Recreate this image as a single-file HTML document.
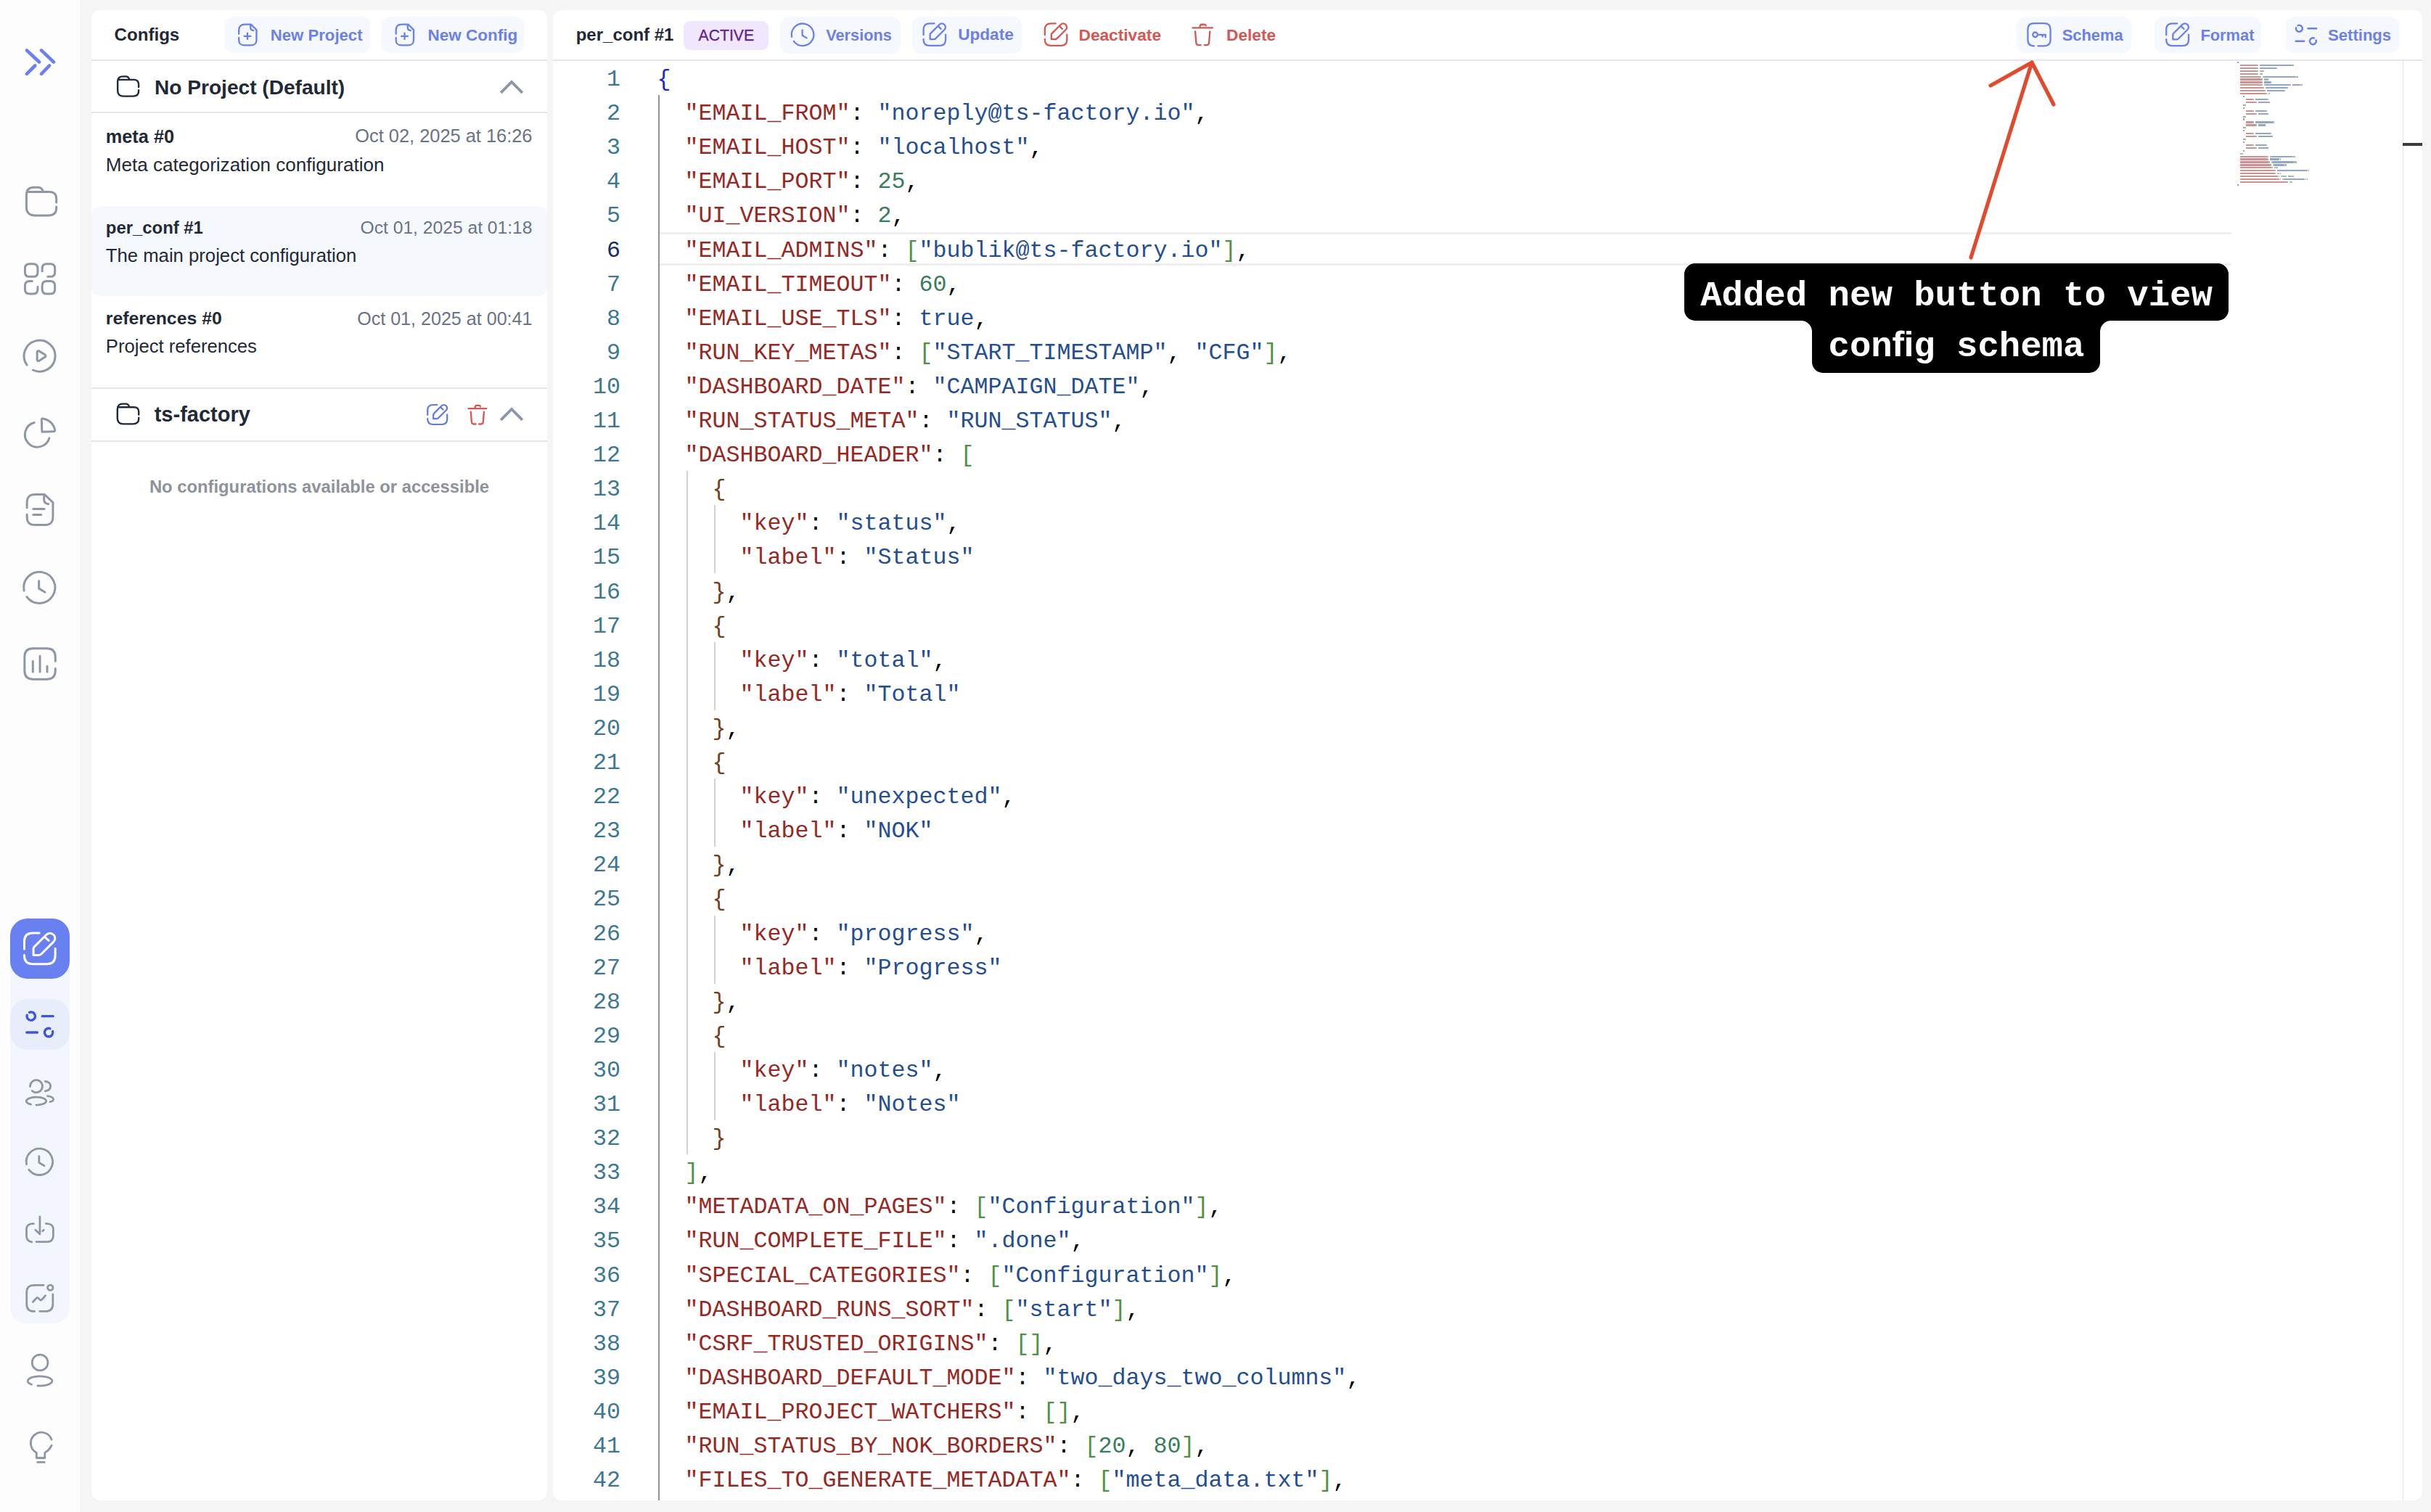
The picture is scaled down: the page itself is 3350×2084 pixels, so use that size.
<!DOCTYPE html><html><head><meta charset="utf-8"><style>
html,body{margin:0;padding:0;}
body{width:3350px;height:2084px;background:#f5f5f5;position:relative;overflow:hidden;font-family:'Liberation Sans', sans-serif;}
.t{position:absolute;white-space:nowrap;line-height:1;}
.r{position:absolute;}
.code{position:absolute;left:0;top:0;font-family:'Liberation Mono', monospace;white-space:pre;}
.ln{position:absolute;font-family:'Liberation Mono', monospace;text-align:right;}
.k{color:#962823} .s{color:#244e92} .n{color:#387e5b} .p{color:#000}
.b1{color:#1b27cc} .b2{color:#4f9245} .b3{color:#70401c}
</style></head><body>
<div class="r" style="left:0px;top:0px;width:110px;height:2084px;background:#fdfdfd;border-radius:0px;"></div>
<div class="r" style="left:14px;top:1266px;width:82px;height:558px;background:#f3f6fe;border-radius:22px;"></div>
<div class="r" style="left:14px;top:1266px;width:82px;height:83px;background:#6981f0;border-radius:24px;"></div>
<div class="r" style="left:14px;top:1377px;width:82px;height:70px;background:#e8edfc;border-radius:24px;"></div>
<div class="r" style="left:126px;top:14px;width:628px;height:2054px;background:#ffffff;border-radius:12px;"></div>
<div class="t" style="left:157.6px;top:36.3px;font-size:24.1px;color:#1f2937;font-weight:bold;">Configs</div>
<div class="r" style="left:309px;top:23px;width:201px;height:50px;background:#f5f8fe;border-radius:12px;"></div>
<div class="t" style="left:372.8px;top:37.9px;font-size:22.15px;color:#6b80ea;font-weight:bold;">New Project</div>
<div class="r" style="left:526px;top:23px;width:196px;height:50px;background:#f5f8fe;border-radius:12px;"></div>
<div class="t" style="left:589.4px;top:37.6px;font-size:22.5px;color:#6b80ea;font-weight:bold;">New Config</div>
<div class="r" style="left:126px;top:82px;width:628px;height:2px;background:#e3e6ec;border-radius:0px;"></div>
<div class="t" style="left:213.0px;top:106.7px;font-size:28.1px;color:#1f2937;font-weight:bold;">No Project (Default)</div>
<div class="r" style="left:126px;top:154px;width:628px;height:2px;background:#e3e6ec;border-radius:0px;"></div>
<div class="r" style="left:126px;top:283.5px;width:628px;height:124.5px;background:#f5f8fd;border-radius:12px;"></div>
<div class="t" style="left:145.8px;top:175.5px;font-size:25.3px;color:#1f2937;font-weight:bold;">meta #0</div>
<div class="t" style="right:2616.5px;top:175.4px;font-size:25.4px;color:#697386;font-weight:normal;">Oct 02, 2025 at 16:26</div>
<div class="t" style="left:145.8px;top:213.9px;font-size:26.05px;color:#1f2937;font-weight:normal;">Meta categorization configuration</div>
<div class="t" style="left:145.8px;top:302.3px;font-size:23.9px;color:#1f2937;font-weight:bold;">per_conf #1</div>
<div class="t" style="right:2616.5px;top:301.6px;font-size:24.65px;color:#697386;font-weight:normal;">Oct 01, 2025 at 01:18</div>
<div class="t" style="left:145.8px;top:339.6px;font-size:25.7px;color:#1f2937;font-weight:normal;">The main project configuration</div>
<div class="t" style="left:145.8px;top:426.8px;font-size:24.8px;color:#1f2937;font-weight:bold;">references #0</div>
<div class="t" style="right:2616.5px;top:426.5px;font-size:25.1px;color:#697386;font-weight:normal;">Oct 01, 2025 at 00:41</div>
<div class="t" style="left:145.8px;top:465.0px;font-size:25.65px;color:#1f2937;font-weight:normal;">Project references</div>
<div class="r" style="left:126px;top:534px;width:628px;height:2px;background:#e3e6ec;border-radius:0px;"></div>
<div class="t" style="left:212.7px;top:557.3px;font-size:29.0px;color:#1f2937;font-weight:bold;">ts-factory</div>
<div class="r" style="left:126px;top:606.5px;width:628px;height:2.0px;background:#e3e6ec;border-radius:0px;"></div>
<div class="t" style="left:-560.0px;width:2000px;text-align:center;top:659.1px;font-size:23.8px;color:#8d929b;font-weight:bold;">No configurations available or accessible</div>
<div class="r" style="left:762px;top:14px;width:2576px;height:2054px;background:#ffffff;border-radius:12px;"></div>
<div class="r" style="left:762px;top:82px;width:2576px;height:2px;background:#e3e6ec;border-radius:0px;"></div>
<div class="t" style="left:793.7px;top:36.1px;font-size:24.0px;color:#1f2937;font-weight:bold;">per_conf #1</div>
<div class="r" style="left:942px;top:29px;width:117px;height:40px;background:#f0e7fc;border-radius:9px;"></div>
<div class="t" style="left:962.5px;top:38.0px;font-size:21.2px;color:#5f2494;font-weight:normal;-webkit-text-stroke:0.35px #5f2494;">ACTIVE</div>
<div class="r" style="left:1075px;top:23px;width:166px;height:51px;background:#f5f8fe;border-radius:12px;"></div>
<div class="t" style="left:1138.2px;top:38.0px;font-size:21.75px;color:#6b80ea;font-weight:bold;">Versions</div>
<div class="r" style="left:1257px;top:23px;width:150.5px;height:51px;background:#f5f8fe;border-radius:12px;"></div>
<div class="t" style="left:1320.2px;top:37.1px;font-size:22.6px;color:#6b80ea;font-weight:bold;">Update</div>
<div class="t" style="left:1486.5px;top:37.0px;font-size:22.7px;color:#d65651;font-weight:bold;">Deactivate</div>
<div class="t" style="left:1690.0px;top:37.0px;font-size:22.7px;color:#d65651;font-weight:bold;">Delete</div>
<div class="r" style="left:2779px;top:23px;width:158px;height:50px;background:#f5f8fe;border-radius:12px;"></div>
<div class="t" style="left:2841.7px;top:37.9px;font-size:21.9px;color:#6b80ea;font-weight:bold;">Schema</div>
<div class="r" style="left:2969px;top:23px;width:147px;height:50px;background:#f5f8fe;border-radius:12px;"></div>
<div class="t" style="left:3032.4px;top:37.9px;font-size:21.85px;color:#6b80ea;font-weight:bold;">Format</div>
<div class="r" style="left:3149px;top:23px;width:157px;height:50px;background:#f5f8fe;border-radius:12px;"></div>
<div class="t" style="left:3208.0px;top:37.7px;font-size:22.1px;color:#6b80ea;font-weight:bold;">Settings</div>
<div class="r" style="left:907px;top:320px;width:2168px;height:39.8px;border-top:3.6px solid #eeeeee;border-bottom:3.6px solid #eeeeee;"></div>
<div class="r" style="left:907px;top:131.1px;width:2px;height:1936.9px;background:#939393;border-radius:0px;"></div>
<div class="r" style="left:945.5px;top:649.2px;width:2.0px;height:942.0px;background:#d3d3d3;border-radius:0px;"></div>
<div class="r" style="left:983.5px;top:696.3px;width:2.0px;height:94.20000000000005px;background:#d3d3d3;border-radius:0px;"></div>
<div class="r" style="left:983.5px;top:884.7px;width:2.0px;height:94.19999999999993px;background:#d3d3d3;border-radius:0px;"></div>
<div class="r" style="left:983.5px;top:1073.1px;width:2.0px;height:94.20000000000005px;background:#d3d3d3;border-radius:0px;"></div>
<div class="r" style="left:983.5px;top:1261.5px;width:2.0px;height:94.20000000000005px;background:#d3d3d3;border-radius:0px;"></div>
<div class="r" style="left:983.5px;top:1449.9px;width:2.0px;height:94.19999999999982px;background:#d3d3d3;border-radius:0px;"></div>
<div class="ln" style="left:700px;width:155px;top:87.0px;height:47.1px;line-height:47.1px;font-size:31.667px;color:#3c7891">1</div>
<div class="code" style="left:905.5px;top:87.0px;height:47.1px;line-height:47.1px;font-size:31.667px"><span class="b1">{</span></div>
<div class="ln" style="left:700px;width:155px;top:134.1px;height:47.1px;line-height:47.1px;font-size:31.667px;color:#3c7891">2</div>
<div class="code" style="left:905.5px;top:134.1px;height:47.1px;line-height:47.1px;font-size:31.667px"><span class="p">  </span><span class="k">&quot;EMAIL_FROM&quot;</span><span class="p">: </span><span class="s">&quot;noreply@ts-factory.io&quot;</span><span class="p">,</span></div>
<div class="ln" style="left:700px;width:155px;top:181.2px;height:47.1px;line-height:47.1px;font-size:31.667px;color:#3c7891">3</div>
<div class="code" style="left:905.5px;top:181.2px;height:47.1px;line-height:47.1px;font-size:31.667px"><span class="p">  </span><span class="k">&quot;EMAIL_HOST&quot;</span><span class="p">: </span><span class="s">&quot;localhost&quot;</span><span class="p">,</span></div>
<div class="ln" style="left:700px;width:155px;top:228.3px;height:47.1px;line-height:47.1px;font-size:31.667px;color:#3c7891">4</div>
<div class="code" style="left:905.5px;top:228.3px;height:47.1px;line-height:47.1px;font-size:31.667px"><span class="p">  </span><span class="k">&quot;EMAIL_PORT&quot;</span><span class="p">: </span><span class="n">25</span><span class="p">,</span></div>
<div class="ln" style="left:700px;width:155px;top:275.4px;height:47.1px;line-height:47.1px;font-size:31.667px;color:#3c7891">5</div>
<div class="code" style="left:905.5px;top:275.4px;height:47.1px;line-height:47.1px;font-size:31.667px"><span class="p">  </span><span class="k">&quot;UI_VERSION&quot;</span><span class="p">: </span><span class="n">2</span><span class="p">,</span></div>
<div class="ln" style="left:700px;width:155px;top:322.5px;height:47.1px;line-height:47.1px;font-size:31.667px;color:#172a6a">6</div>
<div class="code" style="left:905.5px;top:322.5px;height:47.1px;line-height:47.1px;font-size:31.667px"><span class="p">  </span><span class="k">&quot;EMAIL_ADMINS&quot;</span><span class="p">: </span><span class="b2">[</span><span class="s">&quot;bublik@ts-factory.io&quot;</span><span class="b2">]</span><span class="p">,</span></div>
<div class="ln" style="left:700px;width:155px;top:369.6px;height:47.1px;line-height:47.1px;font-size:31.667px;color:#3c7891">7</div>
<div class="code" style="left:905.5px;top:369.6px;height:47.1px;line-height:47.1px;font-size:31.667px"><span class="p">  </span><span class="k">&quot;EMAIL_TIMEOUT&quot;</span><span class="p">: </span><span class="n">60</span><span class="p">,</span></div>
<div class="ln" style="left:700px;width:155px;top:416.7px;height:47.1px;line-height:47.1px;font-size:31.667px;color:#3c7891">8</div>
<div class="code" style="left:905.5px;top:416.7px;height:47.1px;line-height:47.1px;font-size:31.667px"><span class="p">  </span><span class="k">&quot;EMAIL_USE_TLS&quot;</span><span class="p">: </span><span class="s">true</span><span class="p">,</span></div>
<div class="ln" style="left:700px;width:155px;top:463.8px;height:47.1px;line-height:47.1px;font-size:31.667px;color:#3c7891">9</div>
<div class="code" style="left:905.5px;top:463.8px;height:47.1px;line-height:47.1px;font-size:31.667px"><span class="p">  </span><span class="k">&quot;RUN_KEY_METAS&quot;</span><span class="p">: </span><span class="b2">[</span><span class="s">&quot;START_TIMESTAMP&quot;</span><span class="p">, </span><span class="s">&quot;CFG&quot;</span><span class="b2">]</span><span class="p">,</span></div>
<div class="ln" style="left:700px;width:155px;top:510.9px;height:47.1px;line-height:47.1px;font-size:31.667px;color:#3c7891">10</div>
<div class="code" style="left:905.5px;top:510.9px;height:47.1px;line-height:47.1px;font-size:31.667px"><span class="p">  </span><span class="k">&quot;DASHBOARD_DATE&quot;</span><span class="p">: </span><span class="s">&quot;CAMPAIGN_DATE&quot;</span><span class="p">,</span></div>
<div class="ln" style="left:700px;width:155px;top:558.0px;height:47.1px;line-height:47.1px;font-size:31.667px;color:#3c7891">11</div>
<div class="code" style="left:905.5px;top:558.0px;height:47.1px;line-height:47.1px;font-size:31.667px"><span class="p">  </span><span class="k">&quot;RUN_STATUS_META&quot;</span><span class="p">: </span><span class="s">&quot;RUN_STATUS&quot;</span><span class="p">,</span></div>
<div class="ln" style="left:700px;width:155px;top:605.1px;height:47.1px;line-height:47.1px;font-size:31.667px;color:#3c7891">12</div>
<div class="code" style="left:905.5px;top:605.1px;height:47.1px;line-height:47.1px;font-size:31.667px"><span class="p">  </span><span class="k">&quot;DASHBOARD_HEADER&quot;</span><span class="p">: </span><span class="b2">[</span></div>
<div class="ln" style="left:700px;width:155px;top:652.2px;height:47.1px;line-height:47.1px;font-size:31.667px;color:#3c7891">13</div>
<div class="code" style="left:905.5px;top:652.2px;height:47.1px;line-height:47.1px;font-size:31.667px"><span class="p">  </span><span class="p">  </span><span class="b3">{</span></div>
<div class="ln" style="left:700px;width:155px;top:699.3px;height:47.1px;line-height:47.1px;font-size:31.667px;color:#3c7891">14</div>
<div class="code" style="left:905.5px;top:699.3px;height:47.1px;line-height:47.1px;font-size:31.667px"><span class="p">  </span><span class="p">    </span><span class="k">&quot;key&quot;</span><span class="p">: </span><span class="s">&quot;status&quot;</span><span class="p">,</span></div>
<div class="ln" style="left:700px;width:155px;top:746.4px;height:47.1px;line-height:47.1px;font-size:31.667px;color:#3c7891">15</div>
<div class="code" style="left:905.5px;top:746.4px;height:47.1px;line-height:47.1px;font-size:31.667px"><span class="p">  </span><span class="p">    </span><span class="k">&quot;label&quot;</span><span class="p">: </span><span class="s">&quot;Status&quot;</span></div>
<div class="ln" style="left:700px;width:155px;top:793.5px;height:47.1px;line-height:47.1px;font-size:31.667px;color:#3c7891">16</div>
<div class="code" style="left:905.5px;top:793.5px;height:47.1px;line-height:47.1px;font-size:31.667px"><span class="p">  </span><span class="p">  </span><span class="b3">}</span><span class="p">,</span></div>
<div class="ln" style="left:700px;width:155px;top:840.6px;height:47.1px;line-height:47.1px;font-size:31.667px;color:#3c7891">17</div>
<div class="code" style="left:905.5px;top:840.6px;height:47.1px;line-height:47.1px;font-size:31.667px"><span class="p">  </span><span class="p">  </span><span class="b3">{</span></div>
<div class="ln" style="left:700px;width:155px;top:887.7px;height:47.1px;line-height:47.1px;font-size:31.667px;color:#3c7891">18</div>
<div class="code" style="left:905.5px;top:887.7px;height:47.1px;line-height:47.1px;font-size:31.667px"><span class="p">  </span><span class="p">    </span><span class="k">&quot;key&quot;</span><span class="p">: </span><span class="s">&quot;total&quot;</span><span class="p">,</span></div>
<div class="ln" style="left:700px;width:155px;top:934.8px;height:47.1px;line-height:47.1px;font-size:31.667px;color:#3c7891">19</div>
<div class="code" style="left:905.5px;top:934.8px;height:47.1px;line-height:47.1px;font-size:31.667px"><span class="p">  </span><span class="p">    </span><span class="k">&quot;label&quot;</span><span class="p">: </span><span class="s">&quot;Total&quot;</span></div>
<div class="ln" style="left:700px;width:155px;top:981.9px;height:47.1px;line-height:47.1px;font-size:31.667px;color:#3c7891">20</div>
<div class="code" style="left:905.5px;top:981.9px;height:47.1px;line-height:47.1px;font-size:31.667px"><span class="p">  </span><span class="p">  </span><span class="b3">}</span><span class="p">,</span></div>
<div class="ln" style="left:700px;width:155px;top:1029.0px;height:47.1px;line-height:47.1px;font-size:31.667px;color:#3c7891">21</div>
<div class="code" style="left:905.5px;top:1029.0px;height:47.1px;line-height:47.1px;font-size:31.667px"><span class="p">  </span><span class="p">  </span><span class="b3">{</span></div>
<div class="ln" style="left:700px;width:155px;top:1076.1px;height:47.1px;line-height:47.1px;font-size:31.667px;color:#3c7891">22</div>
<div class="code" style="left:905.5px;top:1076.1px;height:47.1px;line-height:47.1px;font-size:31.667px"><span class="p">  </span><span class="p">    </span><span class="k">&quot;key&quot;</span><span class="p">: </span><span class="s">&quot;unexpected&quot;</span><span class="p">,</span></div>
<div class="ln" style="left:700px;width:155px;top:1123.2px;height:47.1px;line-height:47.1px;font-size:31.667px;color:#3c7891">23</div>
<div class="code" style="left:905.5px;top:1123.2px;height:47.1px;line-height:47.1px;font-size:31.667px"><span class="p">  </span><span class="p">    </span><span class="k">&quot;label&quot;</span><span class="p">: </span><span class="s">&quot;NOK&quot;</span></div>
<div class="ln" style="left:700px;width:155px;top:1170.3px;height:47.1px;line-height:47.1px;font-size:31.667px;color:#3c7891">24</div>
<div class="code" style="left:905.5px;top:1170.3px;height:47.1px;line-height:47.1px;font-size:31.667px"><span class="p">  </span><span class="p">  </span><span class="b3">}</span><span class="p">,</span></div>
<div class="ln" style="left:700px;width:155px;top:1217.4px;height:47.1px;line-height:47.1px;font-size:31.667px;color:#3c7891">25</div>
<div class="code" style="left:905.5px;top:1217.4px;height:47.1px;line-height:47.1px;font-size:31.667px"><span class="p">  </span><span class="p">  </span><span class="b3">{</span></div>
<div class="ln" style="left:700px;width:155px;top:1264.5px;height:47.1px;line-height:47.1px;font-size:31.667px;color:#3c7891">26</div>
<div class="code" style="left:905.5px;top:1264.5px;height:47.1px;line-height:47.1px;font-size:31.667px"><span class="p">  </span><span class="p">    </span><span class="k">&quot;key&quot;</span><span class="p">: </span><span class="s">&quot;progress&quot;</span><span class="p">,</span></div>
<div class="ln" style="left:700px;width:155px;top:1311.6px;height:47.1px;line-height:47.1px;font-size:31.667px;color:#3c7891">27</div>
<div class="code" style="left:905.5px;top:1311.6px;height:47.1px;line-height:47.1px;font-size:31.667px"><span class="p">  </span><span class="p">    </span><span class="k">&quot;label&quot;</span><span class="p">: </span><span class="s">&quot;Progress&quot;</span></div>
<div class="ln" style="left:700px;width:155px;top:1358.7px;height:47.1px;line-height:47.1px;font-size:31.667px;color:#3c7891">28</div>
<div class="code" style="left:905.5px;top:1358.7px;height:47.1px;line-height:47.1px;font-size:31.667px"><span class="p">  </span><span class="p">  </span><span class="b3">}</span><span class="p">,</span></div>
<div class="ln" style="left:700px;width:155px;top:1405.8px;height:47.1px;line-height:47.1px;font-size:31.667px;color:#3c7891">29</div>
<div class="code" style="left:905.5px;top:1405.8px;height:47.1px;line-height:47.1px;font-size:31.667px"><span class="p">  </span><span class="p">  </span><span class="b3">{</span></div>
<div class="ln" style="left:700px;width:155px;top:1452.9px;height:47.1px;line-height:47.1px;font-size:31.667px;color:#3c7891">30</div>
<div class="code" style="left:905.5px;top:1452.9px;height:47.1px;line-height:47.1px;font-size:31.667px"><span class="p">  </span><span class="p">    </span><span class="k">&quot;key&quot;</span><span class="p">: </span><span class="s">&quot;notes&quot;</span><span class="p">,</span></div>
<div class="ln" style="left:700px;width:155px;top:1500.0px;height:47.1px;line-height:47.1px;font-size:31.667px;color:#3c7891">31</div>
<div class="code" style="left:905.5px;top:1500.0px;height:47.1px;line-height:47.1px;font-size:31.667px"><span class="p">  </span><span class="p">    </span><span class="k">&quot;label&quot;</span><span class="p">: </span><span class="s">&quot;Notes&quot;</span></div>
<div class="ln" style="left:700px;width:155px;top:1547.1px;height:47.1px;line-height:47.1px;font-size:31.667px;color:#3c7891">32</div>
<div class="code" style="left:905.5px;top:1547.1px;height:47.1px;line-height:47.1px;font-size:31.667px"><span class="p">  </span><span class="p">  </span><span class="b3">}</span></div>
<div class="ln" style="left:700px;width:155px;top:1594.2px;height:47.1px;line-height:47.1px;font-size:31.667px;color:#3c7891">33</div>
<div class="code" style="left:905.5px;top:1594.2px;height:47.1px;line-height:47.1px;font-size:31.667px"><span class="p">  </span><span class="b2">]</span><span class="p">,</span></div>
<div class="ln" style="left:700px;width:155px;top:1641.3px;height:47.1px;line-height:47.1px;font-size:31.667px;color:#3c7891">34</div>
<div class="code" style="left:905.5px;top:1641.3px;height:47.1px;line-height:47.1px;font-size:31.667px"><span class="p">  </span><span class="k">&quot;METADATA_ON_PAGES&quot;</span><span class="p">: </span><span class="b2">[</span><span class="s">&quot;Configuration&quot;</span><span class="b2">]</span><span class="p">,</span></div>
<div class="ln" style="left:700px;width:155px;top:1688.4px;height:47.1px;line-height:47.1px;font-size:31.667px;color:#3c7891">35</div>
<div class="code" style="left:905.5px;top:1688.4px;height:47.1px;line-height:47.1px;font-size:31.667px"><span class="p">  </span><span class="k">&quot;RUN_COMPLETE_FILE&quot;</span><span class="p">: </span><span class="s">&quot;.done&quot;</span><span class="p">,</span></div>
<div class="ln" style="left:700px;width:155px;top:1735.5px;height:47.1px;line-height:47.1px;font-size:31.667px;color:#3c7891">36</div>
<div class="code" style="left:905.5px;top:1735.5px;height:47.1px;line-height:47.1px;font-size:31.667px"><span class="p">  </span><span class="k">&quot;SPECIAL_CATEGORIES&quot;</span><span class="p">: </span><span class="b2">[</span><span class="s">&quot;Configuration&quot;</span><span class="b2">]</span><span class="p">,</span></div>
<div class="ln" style="left:700px;width:155px;top:1782.6px;height:47.1px;line-height:47.1px;font-size:31.667px;color:#3c7891">37</div>
<div class="code" style="left:905.5px;top:1782.6px;height:47.1px;line-height:47.1px;font-size:31.667px"><span class="p">  </span><span class="k">&quot;DASHBOARD_RUNS_SORT&quot;</span><span class="p">: </span><span class="b2">[</span><span class="s">&quot;start&quot;</span><span class="b2">]</span><span class="p">,</span></div>
<div class="ln" style="left:700px;width:155px;top:1829.7px;height:47.1px;line-height:47.1px;font-size:31.667px;color:#3c7891">38</div>
<div class="code" style="left:905.5px;top:1829.7px;height:47.1px;line-height:47.1px;font-size:31.667px"><span class="p">  </span><span class="k">&quot;CSRF_TRUSTED_ORIGINS&quot;</span><span class="p">: </span><span class="b2">[]</span><span class="p">,</span></div>
<div class="ln" style="left:700px;width:155px;top:1876.8px;height:47.1px;line-height:47.1px;font-size:31.667px;color:#3c7891">39</div>
<div class="code" style="left:905.5px;top:1876.8px;height:47.1px;line-height:47.1px;font-size:31.667px"><span class="p">  </span><span class="k">&quot;DASHBOARD_DEFAULT_MODE&quot;</span><span class="p">: </span><span class="s">&quot;two_days_two_columns&quot;</span><span class="p">,</span></div>
<div class="ln" style="left:700px;width:155px;top:1923.9px;height:47.1px;line-height:47.1px;font-size:31.667px;color:#3c7891">40</div>
<div class="code" style="left:905.5px;top:1923.9px;height:47.1px;line-height:47.1px;font-size:31.667px"><span class="p">  </span><span class="k">&quot;EMAIL_PROJECT_WATCHERS&quot;</span><span class="p">: </span><span class="b2">[]</span><span class="p">,</span></div>
<div class="ln" style="left:700px;width:155px;top:1971.0px;height:47.1px;line-height:47.1px;font-size:31.667px;color:#3c7891">41</div>
<div class="code" style="left:905.5px;top:1971.0px;height:47.1px;line-height:47.1px;font-size:31.667px"><span class="p">  </span><span class="k">&quot;RUN_STATUS_BY_NOK_BORDERS&quot;</span><span class="p">: </span><span class="b2">[</span><span class="n">20</span><span class="p">, </span><span class="n">80</span><span class="b2">]</span><span class="p">,</span></div>
<div class="ln" style="left:700px;width:155px;top:2018.1px;height:47.1px;line-height:47.1px;font-size:31.667px;color:#3c7891">42</div>
<div class="code" style="left:905.5px;top:2018.1px;height:47.1px;line-height:47.1px;font-size:31.667px"><span class="p">  </span><span class="k">&quot;FILES_TO_GENERATE_METADATA&quot;</span><span class="p">: </span><span class="b2">[</span><span class="s">&quot;meta_data.txt&quot;</span><span class="b2">]</span><span class="p">,</span></div>
<div class="r" style="left:3083.0px;top:84.8px;width:1.9px;height:2.3px;background:#1b27cc;opacity:0.5"></div><div class="r" style="left:3086.9px;top:88.7px;width:23.4px;height:2.3px;background:#962823;opacity:0.5"></div><div class="r" style="left:3110.3px;top:88.7px;width:1.9px;height:2.3px;background:#000000;opacity:0.3"></div><div class="r" style="left:3114.2px;top:88.7px;width:44.9px;height:2.3px;background:#244e92;opacity:0.5"></div><div class="r" style="left:3159.1px;top:88.7px;width:1.9px;height:2.3px;background:#000000;opacity:0.3"></div><div class="r" style="left:3086.9px;top:92.7px;width:23.4px;height:2.3px;background:#962823;opacity:0.5"></div><div class="r" style="left:3110.3px;top:92.7px;width:1.9px;height:2.3px;background:#000000;opacity:0.3"></div><div class="r" style="left:3114.2px;top:92.7px;width:21.4px;height:2.3px;background:#244e92;opacity:0.5"></div><div class="r" style="left:3135.7px;top:92.7px;width:1.9px;height:2.3px;background:#000000;opacity:0.3"></div><div class="r" style="left:3086.9px;top:96.6px;width:23.4px;height:2.3px;background:#962823;opacity:0.5"></div><div class="r" style="left:3110.3px;top:96.6px;width:1.9px;height:2.3px;background:#000000;opacity:0.3"></div><div class="r" style="left:3114.2px;top:96.6px;width:3.9px;height:2.3px;background:#387e5b;opacity:0.5"></div><div class="r" style="left:3118.1px;top:96.6px;width:1.9px;height:2.3px;background:#000000;opacity:0.3"></div><div class="r" style="left:3086.9px;top:100.5px;width:23.4px;height:2.3px;background:#962823;opacity:0.5"></div><div class="r" style="left:3110.3px;top:100.5px;width:1.9px;height:2.3px;background:#000000;opacity:0.3"></div><div class="r" style="left:3114.2px;top:100.5px;width:1.9px;height:2.3px;background:#387e5b;opacity:0.5"></div><div class="r" style="left:3116.2px;top:100.5px;width:1.9px;height:2.3px;background:#000000;opacity:0.3"></div><div class="r" style="left:3086.9px;top:104.5px;width:27.3px;height:2.3px;background:#962823;opacity:0.5"></div><div class="r" style="left:3114.2px;top:104.5px;width:1.9px;height:2.3px;background:#000000;opacity:0.3"></div><div class="r" style="left:3118.1px;top:104.5px;width:1.9px;height:2.3px;background:#4f9245;opacity:0.5"></div><div class="r" style="left:3120.1px;top:104.5px;width:42.9px;height:2.3px;background:#244e92;opacity:0.5"></div><div class="r" style="left:3162.9px;top:104.5px;width:1.9px;height:2.3px;background:#4f9245;opacity:0.5"></div><div class="r" style="left:3164.9px;top:104.5px;width:1.9px;height:2.3px;background:#000000;opacity:0.3"></div><div class="r" style="left:3086.9px;top:108.4px;width:29.2px;height:2.3px;background:#962823;opacity:0.5"></div><div class="r" style="left:3116.2px;top:108.4px;width:1.9px;height:2.3px;background:#000000;opacity:0.3"></div><div class="r" style="left:3120.1px;top:108.4px;width:3.9px;height:2.3px;background:#387e5b;opacity:0.5"></div><div class="r" style="left:3123.9px;top:108.4px;width:1.9px;height:2.3px;background:#000000;opacity:0.3"></div><div class="r" style="left:3086.9px;top:112.3px;width:29.2px;height:2.3px;background:#962823;opacity:0.5"></div><div class="r" style="left:3116.2px;top:112.3px;width:1.9px;height:2.3px;background:#000000;opacity:0.3"></div><div class="r" style="left:3120.1px;top:112.3px;width:7.8px;height:2.3px;background:#244e92;opacity:0.5"></div><div class="r" style="left:3127.8px;top:112.3px;width:1.9px;height:2.3px;background:#000000;opacity:0.3"></div><div class="r" style="left:3086.9px;top:116.2px;width:29.2px;height:2.3px;background:#962823;opacity:0.5"></div><div class="r" style="left:3116.2px;top:116.2px;width:1.9px;height:2.3px;background:#000000;opacity:0.3"></div><div class="r" style="left:3120.1px;top:116.2px;width:1.9px;height:2.3px;background:#4f9245;opacity:0.5"></div><div class="r" style="left:3122.0px;top:116.2px;width:33.1px;height:2.3px;background:#244e92;opacity:0.5"></div><div class="r" style="left:3155.2px;top:116.2px;width:1.9px;height:2.3px;background:#000000;opacity:0.3"></div><div class="r" style="left:3159.1px;top:116.2px;width:9.8px;height:2.3px;background:#244e92;opacity:0.5"></div><div class="r" style="left:3168.8px;top:116.2px;width:1.9px;height:2.3px;background:#4f9245;opacity:0.5"></div><div class="r" style="left:3170.8px;top:116.2px;width:1.9px;height:2.3px;background:#000000;opacity:0.3"></div><div class="r" style="left:3086.9px;top:120.2px;width:31.2px;height:2.3px;background:#962823;opacity:0.5"></div><div class="r" style="left:3118.1px;top:120.2px;width:1.9px;height:2.3px;background:#000000;opacity:0.3"></div><div class="r" style="left:3122.0px;top:120.2px;width:29.2px;height:2.3px;background:#244e92;opacity:0.5"></div><div class="r" style="left:3151.2px;top:120.2px;width:1.9px;height:2.3px;background:#000000;opacity:0.3"></div><div class="r" style="left:3086.9px;top:124.1px;width:33.1px;height:2.3px;background:#962823;opacity:0.5"></div><div class="r" style="left:3120.1px;top:124.1px;width:1.9px;height:2.3px;background:#000000;opacity:0.3"></div><div class="r" style="left:3123.9px;top:124.1px;width:23.4px;height:2.3px;background:#244e92;opacity:0.5"></div><div class="r" style="left:3147.3px;top:124.1px;width:1.9px;height:2.3px;background:#000000;opacity:0.3"></div><div class="r" style="left:3086.9px;top:128.0px;width:35.1px;height:2.3px;background:#962823;opacity:0.5"></div><div class="r" style="left:3122.0px;top:128.0px;width:1.9px;height:2.3px;background:#000000;opacity:0.3"></div><div class="r" style="left:3125.9px;top:128.0px;width:1.9px;height:2.3px;background:#4f9245;opacity:0.5"></div><div class="r" style="left:3090.8px;top:132.0px;width:1.9px;height:2.3px;background:#70401c;opacity:0.5"></div><div class="r" style="left:3094.7px;top:135.9px;width:9.8px;height:2.3px;background:#962823;opacity:0.5"></div><div class="r" style="left:3104.4px;top:135.9px;width:1.9px;height:2.3px;background:#000000;opacity:0.3"></div><div class="r" style="left:3108.3px;top:135.9px;width:15.6px;height:2.3px;background:#244e92;opacity:0.5"></div><div class="r" style="left:3123.9px;top:135.9px;width:1.9px;height:2.3px;background:#000000;opacity:0.3"></div><div class="r" style="left:3094.7px;top:139.8px;width:13.7px;height:2.3px;background:#962823;opacity:0.5"></div><div class="r" style="left:3108.3px;top:139.8px;width:1.9px;height:2.3px;background:#000000;opacity:0.3"></div><div class="r" style="left:3112.2px;top:139.8px;width:15.6px;height:2.3px;background:#244e92;opacity:0.5"></div><div class="r" style="left:3090.8px;top:143.8px;width:1.9px;height:2.3px;background:#70401c;opacity:0.5"></div><div class="r" style="left:3092.8px;top:143.8px;width:1.9px;height:2.3px;background:#000000;opacity:0.3"></div><div class="r" style="left:3090.8px;top:147.7px;width:1.9px;height:2.3px;background:#70401c;opacity:0.5"></div><div class="r" style="left:3094.7px;top:151.6px;width:9.8px;height:2.3px;background:#962823;opacity:0.5"></div><div class="r" style="left:3104.4px;top:151.6px;width:1.9px;height:2.3px;background:#000000;opacity:0.3"></div><div class="r" style="left:3108.3px;top:151.6px;width:13.7px;height:2.3px;background:#244e92;opacity:0.5"></div><div class="r" style="left:3122.0px;top:151.6px;width:1.9px;height:2.3px;background:#000000;opacity:0.3"></div><div class="r" style="left:3094.7px;top:155.5px;width:13.7px;height:2.3px;background:#962823;opacity:0.5"></div><div class="r" style="left:3108.3px;top:155.5px;width:1.9px;height:2.3px;background:#000000;opacity:0.3"></div><div class="r" style="left:3112.2px;top:155.5px;width:13.7px;height:2.3px;background:#244e92;opacity:0.5"></div><div class="r" style="left:3090.8px;top:159.5px;width:1.9px;height:2.3px;background:#70401c;opacity:0.5"></div><div class="r" style="left:3092.8px;top:159.5px;width:1.9px;height:2.3px;background:#000000;opacity:0.3"></div><div class="r" style="left:3090.8px;top:163.4px;width:1.9px;height:2.3px;background:#70401c;opacity:0.5"></div><div class="r" style="left:3094.7px;top:167.3px;width:9.8px;height:2.3px;background:#962823;opacity:0.5"></div><div class="r" style="left:3104.4px;top:167.3px;width:1.9px;height:2.3px;background:#000000;opacity:0.3"></div><div class="r" style="left:3108.3px;top:167.3px;width:23.4px;height:2.3px;background:#244e92;opacity:0.5"></div><div class="r" style="left:3131.8px;top:167.3px;width:1.9px;height:2.3px;background:#000000;opacity:0.3"></div><div class="r" style="left:3094.7px;top:171.3px;width:13.7px;height:2.3px;background:#962823;opacity:0.5"></div><div class="r" style="left:3108.3px;top:171.3px;width:1.9px;height:2.3px;background:#000000;opacity:0.3"></div><div class="r" style="left:3112.2px;top:171.3px;width:9.8px;height:2.3px;background:#244e92;opacity:0.5"></div><div class="r" style="left:3090.8px;top:175.2px;width:1.9px;height:2.3px;background:#70401c;opacity:0.5"></div><div class="r" style="left:3092.8px;top:175.2px;width:1.9px;height:2.3px;background:#000000;opacity:0.3"></div><div class="r" style="left:3090.8px;top:179.1px;width:1.9px;height:2.3px;background:#70401c;opacity:0.5"></div><div class="r" style="left:3094.7px;top:183.1px;width:9.8px;height:2.3px;background:#962823;opacity:0.5"></div><div class="r" style="left:3104.4px;top:183.1px;width:1.9px;height:2.3px;background:#000000;opacity:0.3"></div><div class="r" style="left:3108.3px;top:183.1px;width:19.5px;height:2.3px;background:#244e92;opacity:0.5"></div><div class="r" style="left:3127.8px;top:183.1px;width:1.9px;height:2.3px;background:#000000;opacity:0.3"></div><div class="r" style="left:3094.7px;top:187.0px;width:13.7px;height:2.3px;background:#962823;opacity:0.5"></div><div class="r" style="left:3108.3px;top:187.0px;width:1.9px;height:2.3px;background:#000000;opacity:0.3"></div><div class="r" style="left:3112.2px;top:187.0px;width:19.5px;height:2.3px;background:#244e92;opacity:0.5"></div><div class="r" style="left:3090.8px;top:190.9px;width:1.9px;height:2.3px;background:#70401c;opacity:0.5"></div><div class="r" style="left:3092.8px;top:190.9px;width:1.9px;height:2.3px;background:#000000;opacity:0.3"></div><div class="r" style="left:3090.8px;top:194.8px;width:1.9px;height:2.3px;background:#70401c;opacity:0.5"></div><div class="r" style="left:3094.7px;top:198.8px;width:9.8px;height:2.3px;background:#962823;opacity:0.5"></div><div class="r" style="left:3104.4px;top:198.8px;width:1.9px;height:2.3px;background:#000000;opacity:0.3"></div><div class="r" style="left:3108.3px;top:198.8px;width:13.7px;height:2.3px;background:#244e92;opacity:0.5"></div><div class="r" style="left:3122.0px;top:198.8px;width:1.9px;height:2.3px;background:#000000;opacity:0.3"></div><div class="r" style="left:3094.7px;top:202.7px;width:13.7px;height:2.3px;background:#962823;opacity:0.5"></div><div class="r" style="left:3108.3px;top:202.7px;width:1.9px;height:2.3px;background:#000000;opacity:0.3"></div><div class="r" style="left:3112.2px;top:202.7px;width:13.7px;height:2.3px;background:#244e92;opacity:0.5"></div><div class="r" style="left:3090.8px;top:206.6px;width:1.9px;height:2.3px;background:#70401c;opacity:0.5"></div><div class="r" style="left:3086.9px;top:210.6px;width:1.9px;height:2.3px;background:#4f9245;opacity:0.5"></div><div class="r" style="left:3088.8px;top:210.6px;width:1.9px;height:2.3px;background:#000000;opacity:0.3"></div><div class="r" style="left:3086.9px;top:214.5px;width:37.0px;height:2.3px;background:#962823;opacity:0.5"></div><div class="r" style="left:3123.9px;top:214.5px;width:1.9px;height:2.3px;background:#000000;opacity:0.3"></div><div class="r" style="left:3127.8px;top:214.5px;width:1.9px;height:2.3px;background:#4f9245;opacity:0.5"></div><div class="r" style="left:3129.8px;top:214.5px;width:29.2px;height:2.3px;background:#244e92;opacity:0.5"></div><div class="r" style="left:3159.1px;top:214.5px;width:1.9px;height:2.3px;background:#4f9245;opacity:0.5"></div><div class="r" style="left:3161.0px;top:214.5px;width:1.9px;height:2.3px;background:#000000;opacity:0.3"></div><div class="r" style="left:3086.9px;top:218.4px;width:37.0px;height:2.3px;background:#962823;opacity:0.5"></div><div class="r" style="left:3123.9px;top:218.4px;width:1.9px;height:2.3px;background:#000000;opacity:0.3"></div><div class="r" style="left:3127.8px;top:218.4px;width:13.7px;height:2.3px;background:#244e92;opacity:0.5"></div><div class="r" style="left:3141.5px;top:218.4px;width:1.9px;height:2.3px;background:#000000;opacity:0.3"></div><div class="r" style="left:3086.9px;top:222.4px;width:39.0px;height:2.3px;background:#962823;opacity:0.5"></div><div class="r" style="left:3125.9px;top:222.4px;width:1.9px;height:2.3px;background:#000000;opacity:0.3"></div><div class="r" style="left:3129.8px;top:222.4px;width:1.9px;height:2.3px;background:#4f9245;opacity:0.5"></div><div class="r" style="left:3131.8px;top:222.4px;width:29.2px;height:2.3px;background:#244e92;opacity:0.5"></div><div class="r" style="left:3161.0px;top:222.4px;width:1.9px;height:2.3px;background:#4f9245;opacity:0.5"></div><div class="r" style="left:3162.9px;top:222.4px;width:1.9px;height:2.3px;background:#000000;opacity:0.3"></div><div class="r" style="left:3086.9px;top:226.3px;width:40.9px;height:2.3px;background:#962823;opacity:0.5"></div><div class="r" style="left:3127.8px;top:226.3px;width:1.9px;height:2.3px;background:#000000;opacity:0.3"></div><div class="r" style="left:3131.8px;top:226.3px;width:1.9px;height:2.3px;background:#4f9245;opacity:0.5"></div><div class="r" style="left:3133.7px;top:226.3px;width:13.7px;height:2.3px;background:#244e92;opacity:0.5"></div><div class="r" style="left:3147.3px;top:226.3px;width:1.9px;height:2.3px;background:#4f9245;opacity:0.5"></div><div class="r" style="left:3149.3px;top:226.3px;width:1.9px;height:2.3px;background:#000000;opacity:0.3"></div><div class="r" style="left:3086.9px;top:230.2px;width:42.9px;height:2.3px;background:#962823;opacity:0.5"></div><div class="r" style="left:3129.8px;top:230.2px;width:1.9px;height:2.3px;background:#000000;opacity:0.3"></div><div class="r" style="left:3133.7px;top:230.2px;width:3.9px;height:2.3px;background:#4f9245;opacity:0.5"></div><div class="r" style="left:3137.6px;top:230.2px;width:1.9px;height:2.3px;background:#000000;opacity:0.3"></div><div class="r" style="left:3086.9px;top:234.1px;width:46.8px;height:2.3px;background:#962823;opacity:0.5"></div><div class="r" style="left:3133.7px;top:234.1px;width:1.9px;height:2.3px;background:#000000;opacity:0.3"></div><div class="r" style="left:3137.6px;top:234.1px;width:42.9px;height:2.3px;background:#244e92;opacity:0.5"></div><div class="r" style="left:3180.5px;top:234.1px;width:1.9px;height:2.3px;background:#000000;opacity:0.3"></div><div class="r" style="left:3086.9px;top:238.1px;width:46.8px;height:2.3px;background:#962823;opacity:0.5"></div><div class="r" style="left:3133.7px;top:238.1px;width:1.9px;height:2.3px;background:#000000;opacity:0.3"></div><div class="r" style="left:3137.6px;top:238.1px;width:3.9px;height:2.3px;background:#4f9245;opacity:0.5"></div><div class="r" style="left:3141.5px;top:238.1px;width:1.9px;height:2.3px;background:#000000;opacity:0.3"></div><div class="r" style="left:3086.9px;top:242.0px;width:52.6px;height:2.3px;background:#962823;opacity:0.5"></div><div class="r" style="left:3139.6px;top:242.0px;width:1.9px;height:2.3px;background:#000000;opacity:0.3"></div><div class="r" style="left:3143.4px;top:242.0px;width:1.9px;height:2.3px;background:#4f9245;opacity:0.5"></div><div class="r" style="left:3145.4px;top:242.0px;width:3.9px;height:2.3px;background:#387e5b;opacity:0.5"></div><div class="r" style="left:3149.3px;top:242.0px;width:1.9px;height:2.3px;background:#000000;opacity:0.3"></div><div class="r" style="left:3153.2px;top:242.0px;width:3.9px;height:2.3px;background:#387e5b;opacity:0.5"></div><div class="r" style="left:3157.1px;top:242.0px;width:1.9px;height:2.3px;background:#4f9245;opacity:0.5"></div><div class="r" style="left:3159.1px;top:242.0px;width:1.9px;height:2.3px;background:#000000;opacity:0.3"></div><div class="r" style="left:3086.9px;top:245.9px;width:54.6px;height:2.3px;background:#962823;opacity:0.5"></div><div class="r" style="left:3141.5px;top:245.9px;width:1.9px;height:2.3px;background:#000000;opacity:0.3"></div><div class="r" style="left:3145.4px;top:245.9px;width:1.9px;height:2.3px;background:#4f9245;opacity:0.5"></div><div class="r" style="left:3147.3px;top:245.9px;width:29.2px;height:2.3px;background:#244e92;opacity:0.5"></div><div class="r" style="left:3176.6px;top:245.9px;width:1.9px;height:2.3px;background:#4f9245;opacity:0.5"></div><div class="r" style="left:3178.6px;top:245.9px;width:1.9px;height:2.3px;background:#000000;opacity:0.3"></div><div class="r" style="left:3086.9px;top:249.9px;width:64.3px;height:2.3px;background:#962823;opacity:0.5"></div><div class="r" style="left:3151.2px;top:249.9px;width:1.9px;height:2.3px;background:#000000;opacity:0.3"></div><div class="r" style="left:3155.2px;top:249.9px;width:3.9px;height:2.3px;background:#4f9245;opacity:0.5"></div><div class="r" style="left:3083.0px;top:253.8px;width:1.9px;height:2.3px;background:#1b27cc;opacity:0.5"></div>
<div class="r" style="left:3311px;top:84px;width:1px;height:1984px;background:#e4e4e4;border-radius:0px;"></div>
<div class="r" style="left:3311px;top:197px;width:27px;height:4px;background:#3a3a3a;border-radius:0px;"></div>
<svg style="position:absolute;left:0;top:0" width="3350" height="2084" viewBox="0 0 3350 2084"><path d="M2336 363H3056A15 15 0 0 1 3071 378V427A15 15 0 0 1 3056 442H2909A15 15 0 0 0 2894 457V499A15 15 0 0 1 2879 514H2512A15 15 0 0 1 2497 499V457A15 15 0 0 0 2482 442H2336A15 15 0 0 1 2321 427V378A15 15 0 0 1 2336 363Z" fill="#000"/></svg>
<div class="t" style="left:1696px;width:2000px;text-align:center;top:383.5px;font-family:'Liberation Mono', monospace;font-weight:bold;font-size:49.0px;color:#fff">Added new button to view</div>
<div class="t" style="left:1696px;width:2000px;text-align:center;top:453.5px;font-family:'Liberation Mono', monospace;font-weight:bold;font-size:49.0px;color:#fff">conﬁg schema</div>
<svg style="position:absolute;left:0;top:0" width="3350" height="2084" viewBox="0 0 3350 2084" fill="none" stroke-linecap="round" stroke-linejoin="round"><path d="M36.9 69.4L54.1 85.5M48.3 90.5L36.9 101.9M57 69.4L74 85.5M68.1 90.5L57 101.9" stroke="#6a7ff0" stroke-width="4.6"/><path transform="translate(32.52 252.82) scale(2.0441)" d="M22.1 12.75V10.2C22.1 7.4 20.6 5.7 17.6 5.7H2.3M22.1 15.75V16.6C22.1 20 20.1 21.6 16.6 21.6H7.4C3.9 21.6 1.9 19.6 1.9 16.1V7.6C1.9 4.4 3.6 2.6 7 2.6H9.9C11.5 2.6 12.6 3.6 13.3 5.7" stroke="#8e97a6" stroke-width="1.468" /><path transform="translate(30.33 359.73) scale(2.0600)" d="M5 2H7.5C9.4 2 10.5 3.1 10.5 5V7.5C10.5 9.4 9.4 10.5 7.5 10.5H5C3.1 10.5 2 9.4 2 7.5V5C2 3.1 3.1 2 5 2ZM13.5 6.8V5C13.5 3.1 14.6 2 16.5 2H19C20.9 2 22 3.1 22 5V7.5C22 9.4 20.9 10.5 19 10.5H17.2M6.8 13.5H5C3.1 13.5 2 14.6 2 16.5V19C2 20.9 3.1 22 5 22H7.5C9.4 22 10.5 20.9 10.5 19V17.2M16.5 13.5H19C20.9 13.5 22 14.6 22 16.5V19C22 20.9 20.9 22 19 22H16.5C14.6 22 13.5 20.9 13.5 19V16.5C13.5 14.6 14.6 13.5 16.5 13.5Z" stroke="#8e97a6" stroke-width="1.456" /><path transform="translate(28.83 464.78) scale(2.1475)" d="M3.86 17.81A10 10 0 1 1 7.77 21.06M10.4 9.6C10.4 8.9 11.1 8.5 11.7 8.9L15.5 11.3C16 11.7 16 12.3 15.5 12.7L11.7 15.1C11.1 15.5 10.4 15.1 10.4 14.4Z" stroke="#8e97a6" stroke-width="1.397" /><path d="M47.2 582.5A17.1 17.1 0 1 0 67.9 603.9M57.9 595.2L57.3 578.5C57.3 577.4 58.1 576.7 59.2 576.9C67.5 578.2 74 584.3 75.7 592.7C75.9 593.9 75.1 594.7 73.9 594.7Z" stroke="#8e97a6" stroke-width="3"/><path transform="translate(29.78 677.28) scale(2.1057)" d="M3.5 10.7V7.5C3.5 3.8 5 2 9 2H15L20.5 7.3V16.5C20.5 20.3 19 22 15 22H9C5 22 3.5 20.3 3.5 16.5V15.1M14.7 2.3V5.6C14.7 7 15.8 8 17.5 8.3M7.6 11.5H14.9M7.6 15.3H12.8" stroke="#8e97a6" stroke-width="1.425" /><path transform="translate(28.41 783.96) scale(2.1575)" d="M2.18 13.91A10 10 0 1 1 3.94 17.92M11.7 7.8V12.6L15.6 15" stroke="#8e97a6" stroke-width="1.390" /><path transform="translate(29.61 889.51) scale(2.1200)" d="M22 10.3V7.5C22 3.8 20.2 2 16.5 2H7.5C3.8 2 2 3.8 2 7.5V16.5C2 20.2 3.8 22 7.5 22H16.5C20.2 22 22 20.2 22 16.5V15M7.4 10.2V17.2M12 7V17.2M16.7 13.5V17.2" stroke="#8e97a6" stroke-width="1.415" /><path transform="translate(29.21 1281.86) scale(2.1322)" d="M11.7 2H7.5C3.8 2 2 3.8 2 7.5V12.3M2 16.1V16.5C2 20.2 3.8 22 7.5 22H16.5C20.2 22 22 20.2 22 16.5V11.9M7.9 16.2V12.2C7.9 11.6 8.1 11.2 8.5 10.8L16.3 3C17.6 1.7 19.6 1.7 20.9 3C22.2 4.3 22.2 6.3 20.9 7.6L13.1 15.4C12.6 15.9 12.2 16.2 11.5 16.2ZM15.7 4.9L17.8 6.8" stroke="#ffffff" stroke-width="1.407" /><path transform="translate(31.28 1388.25) scale(1.9705)" d="M4.68 3.61A2.9 2.9 0 1 1 3.0 5.58M13.65 6.28H21.28M2.8 17.67H10.22M20.97 16.92A2.9 2.9 0 1 1 19.07 14.91" stroke="#3d57d8" stroke-width="1.725" /><path d="M41.48 1497.67A8.53 8.53 0 1 1 44.18 1503.46M62.3 1490.48C67.06 1490.87 69.64 1493.65 69.64 1497.02C69.64 1500.4 67.06 1503.17 62.3 1503.77M50 1523.1A13.69 5.44 0 1 0 42.46 1522.2M65.48 1510.71C70.5 1511.5 73.6 1513.3 73.6 1515.3C73.6 1517.1 71.8 1518.2 69.05 1518.65" stroke="#8e97a6" stroke-width="2.8"/><path transform="translate(32.59 1579.54) scale(1.8175)" d="M2.18 13.91A10 10 0 1 1 3.94 17.92M11.7 7.8V12.6L15.6 15" stroke="#8e97a6" stroke-width="1.541" /><path d="M46.4 1686.6H44.5C39.5 1686.6 36.5 1689.6 36.5 1694.6V1703.6C36.5 1708.6 39.5 1711.4 44 1711.8M63.3 1686.6H65.4C70.4 1686.6 73.4 1689.6 73.4 1694.6V1703.6C73.4 1708.6 70.4 1711.6 65.4 1711.6H50M48.8 1695.2L54.96 1700.9V1676.9M60.3 1695.2L58.7 1696.7" stroke="#8e97a6" stroke-width="2.8"/><path transform="translate(33.15 1767.77) scale(1.8040)" d="M22 8.95V16.5C22 20.2 20.2 22 16.5 22H12M8 22H7.5C3.8 22 2 20.2 2 16.5V7.5C2 3.8 3.8 2 7.5 2H14.9M6.8 14.8L9.4 11.9C9.8 11.4 10.5 11.4 10.9 11.9L12.1 13.1C12.5 13.6 13.2 13.5 13.6 13L16.3 10M22.11 3.87A2.06 2.06 0 1 1 17.99 3.87A2.06 2.06 0 1 1 22.11 3.87Z" stroke="#8e97a6" stroke-width="1.552" /><path d="M66 1878A10.9 10.9 0 1 1 44.2 1878A10.9 10.9 0 1 1 66 1878ZM52 1910A16.85 6.6 0 1 0 43.5 1908.3" stroke="#8e97a6" stroke-width="2.8"/><path d="M71.1 1984.2A14.8 14.8 0 1 0 50.3 2002.2V2009.5H61.8V2002.2C65.5 2000 69.2 1996.5 71.1 1992.1M51.6 2015.4H61.3" stroke="#8e97a6" stroke-width="2.8"/><path transform="translate(323.06 29.76) scale(1.5199)" d="M4 11.2V8C4 4.2 5.6 2.5 9.5 2.5H15L20 7.5V16.5C20 20.3 18.4 21.5 14.5 21.5H9.5C5.6 21.5 4 20.3 4 16.5V14.6M14.6 2.7V5.6C14.6 7 15.5 7.9 17.3 8.1M8.9 13.2H14.7M11.8 10.4V16" stroke="#6b80ea" stroke-width="1.513" /><path transform="translate(539.57 29.72) scale(1.5230)" d="M4 11.2V8C4 4.2 5.6 2.5 9.5 2.5H15L20 7.5V16.5C20 20.3 18.4 21.5 14.5 21.5H9.5C5.6 21.5 4 20.3 4 16.5V14.6M14.6 2.7V5.6C14.6 7 15.5 7.9 17.3 8.1M8.9 13.2H14.7M11.8 10.4V16" stroke="#6b80ea" stroke-width="1.510" /><path transform="translate(159.42 101.68) scale(1.4317)" d="M22.1 12.75V10.2C22.1 7.4 20.6 5.7 17.6 5.7H2.3M22.1 15.75V16.6C22.1 20 20.1 21.6 16.6 21.6H7.4C3.9 21.6 1.9 19.6 1.9 16.1V7.6C1.9 4.4 3.6 2.6 7 2.6H9.9C11.5 2.6 12.6 3.6 13.3 5.7" stroke="#1f2937" stroke-width="1.676" /><path transform="translate(682.76 99.04) scale(1.8531)" d="M4 15.5L12 7.5L20 15.5" stroke="#8e97a6" stroke-width="2.105" stroke-linecap="butt" stroke-linejoin="miter"/><path transform="translate(159.01 552.87) scale(1.4574)" d="M22.1 12.75V10.2C22.1 7.4 20.6 5.7 17.6 5.7H2.3M22.1 15.75V16.6C22.1 20 20.1 21.6 16.6 21.6H7.4C3.9 21.6 1.9 19.6 1.9 16.1V7.6C1.9 4.4 3.6 2.6 7 2.6H9.9C11.5 2.6 12.6 3.6 13.3 5.7" stroke="#1f2937" stroke-width="1.647" /><path transform="translate(586.51 555.28) scale(1.3516)" d="M11.7 2H7.5C3.8 2 2 3.8 2 7.5V12.3M2 16.1V16.5C2 20.2 3.8 22 7.5 22H16.5C20.2 22 22 20.2 22 16.5V11.9M7.9 16.2V12.2C7.9 11.6 8.1 11.2 8.5 10.8L16.3 3C17.6 1.7 19.6 1.7 20.9 3C22.2 4.3 22.2 6.3 20.9 7.6L13.1 15.4C12.6 15.9 12.2 16.2 11.5 16.2ZM15.7 4.9L17.8 6.8" stroke="#6078e2" stroke-width="1.628" /><path transform="translate(640.82 554.26) scale(1.4192)" d="M3.3 6.3H20.7M9.5 6.2C9.6 4.4 10 3.3 11.3 3.3H13.6C14.3 3.3 14.7 3.7 14.9 4.3M5.6 9.4L6.4 19.2C6.5 20.6 7.4 21.3 8.6 21.3H10.4M13.6 21.3H15.4C16.6 21.3 17.5 20.6 17.6 19.2L18.4 9.4" stroke="#d95550" stroke-width="1.621" /><path transform="translate(682.76 550.04) scale(1.8531)" d="M4 15.5L12 7.5L20 15.5" stroke="#8e97a6" stroke-width="2.105" stroke-linecap="butt" stroke-linejoin="miter"/><path transform="translate(1087.80 29.50) scale(1.5250)" d="M2.18 13.91A10 10 0 1 1 3.94 17.92M11.7 7.8V12.6L15.6 15" stroke="#6b80ea" stroke-width="1.508" /><path transform="translate(1269.59 29.42) scale(1.5237)" d="M11.7 2H7.5C3.8 2 2 3.8 2 7.5V12.3M2 16.1V16.5C2 20.2 3.8 22 7.5 22H16.5C20.2 22 22 20.2 22 16.5V11.9M7.9 16.2V12.2C7.9 11.6 8.1 11.2 8.5 10.8L16.3 3C17.6 1.7 19.6 1.7 20.9 3C22.2 4.3 22.2 6.3 20.9 7.6L13.1 15.4C12.6 15.9 12.2 16.2 11.5 16.2ZM15.7 4.9L17.8 6.8" stroke="#6b80ea" stroke-width="1.510" /><path transform="translate(1436.79 29.42) scale(1.5237)" d="M11.7 2H7.5C3.8 2 2 3.8 2 7.5V12.3M2 16.1V16.5C2 20.2 3.8 22 7.5 22H16.5C20.2 22 22 20.2 22 16.5V11.9M7.9 16.2V12.2C7.9 11.6 8.1 11.2 8.5 10.8L16.3 3C17.6 1.7 19.6 1.7 20.9 3C22.2 4.3 22.2 6.3 20.9 7.6L13.1 15.4C12.6 15.9 12.2 16.2 11.5 16.2ZM15.7 4.9L17.8 6.8" stroke="#d65651" stroke-width="1.510" /><path transform="translate(1638.27 28.53) scale(1.5779)" d="M3.3 6.3H20.7M9.5 6.2C9.6 4.4 10 3.3 11.3 3.3H13.6C14.3 3.3 14.7 3.7 14.9 4.3M5.6 9.4L6.4 19.2C6.5 20.6 7.4 21.3 8.6 21.3H10.4M13.6 21.3H15.4C16.6 21.3 17.5 20.6 17.6 19.2L18.4 9.4" stroke="#d65651" stroke-width="1.458" /><path transform="translate(2791.28 29.08) scale(1.5600)" d="M7.5 22C3.8 22 2 20.2 2 16.5V7.5C2 3.8 3.8 2 7.5 2H16.5C20.2 2 22 3.8 22 7.5V16.5C22 20.2 20.2 22 16.5 22H11M10.6 12A2.1 2.1 0 1 1 6.4 12A2.1 2.1 0 1 1 10.6 12ZM10.6 12H17.6V14.2M15 12V13.7" stroke="#6b80ea" stroke-width="1.474" /><path transform="translate(2982.13 29.31) scale(1.5411)" d="M11.7 2H7.5C3.8 2 2 3.8 2 7.5V12.3M2 16.1V16.5C2 20.2 3.8 22 7.5 22H16.5C20.2 22 22 20.2 22 16.5V11.9M7.9 16.2V12.2C7.9 11.6 8.1 11.2 8.5 10.8L16.3 3C17.6 1.7 19.6 1.7 20.9 3C22.2 4.3 22.2 6.3 20.9 7.6L13.1 15.4C12.6 15.9 12.2 16.2 11.5 16.2ZM15.7 4.9L17.8 6.8" stroke="#6b80ea" stroke-width="1.492" /><path transform="translate(3159.48 29.63) scale(1.5338)" d="M4.68 3.61A2.9 2.9 0 1 1 3.0 5.58M13.65 6.28H21.28M2.8 17.67H10.22M20.97 16.92A2.9 2.9 0 1 1 19.07 14.91" stroke="#6b80ea" stroke-width="1.630" /><path d="M2716 355L2800 86M2743 118L2800 86L2830 144" stroke="#e14a2c" stroke-width="5.2"/></svg>
</body></html>
